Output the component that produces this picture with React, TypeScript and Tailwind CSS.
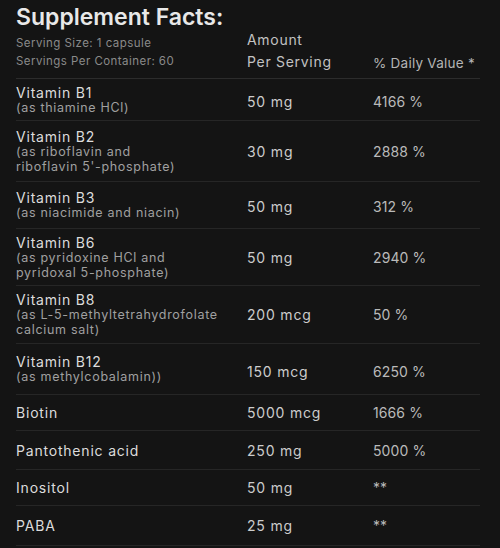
import React from "react";

type Row = { name: string; sub?: string[]; amount: string; dv: string; h: number; off?: number };

const rows: Row[] = [
  { name: "Vitamin B1", sub: ["(as thiamine HCl)"], amount: "50 mg", dv: "4166 %", h: 42, off: 2 },
  { name: "Vitamin B2", sub: ["(as riboflavin and", "riboflavin 5'-phosphate)"], amount: "30 mg", dv: "2888 %", h: 61 },
  { name: "Vitamin B3", sub: ["(as niacimide and niacin)"], amount: "50 mg", dv: "312 %", h: 47, off: 1 },
  { name: "Vitamin B6", sub: ["(as pyridoxine HCl and", "pyridoxal 5-phosphate)"], amount: "50 mg", dv: "2940 %", h: 57 },
  { name: "Vitamin B8", sub: ["(as L-5-methyltetrahydrofolate", "calcium salt)"], amount: "200 mcg", dv: "50 %", h: 58 },
  { name: "Vitamin B12", sub: ["(as methylcobalamin))"], amount: "150 mcg", dv: "6250 %", h: 51, off: 2 },
  { name: "Biotin", amount: "5000 mcg", dv: "1666 %", h: 36 },
  { name: "Pantothenic acid", amount: "250 mg", dv: "5000 %", h: 39 },
  { name: "Inositol", amount: "50 mg", dv: "**", h: 36 },
  { name: "PABA", amount: "25 mg", dv: "**", h: 40 },
];

export default function App() {
  return (
    <div
      className="w-[500px] h-[548px] bg-[#141414] overflow-hidden px-4"
      style={{ fontFamily: "Inter, 'DejaVu Sans', sans-serif" }}
    >
      <div className="w-[464px]">
        <div className="h-[29px] pt-[2px] text-[23px] leading-[30px] font-semibold text-[#e8e8e8] tracking-[0px]">
          Supplement Facts:
        </div>
        <div className="grid grid-cols-[231px_126px_107px] h-[50px] border-b border-[#2c2c2c]">
          <div className="pt-[5px] text-[11.5px] leading-[18px] text-[#8a8a8a] tracking-[0.45px]">
            <div>Serving Size: 1 capsule</div>
            <div>Servings Per Container: 60</div>
          </div>
          <div className="text-[14px] leading-[22px] text-[#c2c2c2] tracking-[0.7px]">
            <div>Amount</div>
            <div>Per Serving</div>
          </div>
          <div className="pt-[23px] text-[13.5px] leading-[22px] text-[#b5b5b5] tracking-[0.25px]">% Daily Value *</div>
        </div>
        {rows.map((r, i) => (
          <div
            key={i}
            className="grid grid-cols-[231px_126px_107px] items-center border-b border-[#262626]"
            style={{ height: r.h }}
          >
            <div>
              <div className="text-[14px] leading-[15px] text-[#dcdcdc] tracking-[0.8px]">{r.name}</div>
              {r.sub &&
                r.sub.map((s, j) => (
                  <div key={j} className="text-[12.5px] leading-[15px] text-[#a0a0a0] tracking-[0.7px]">
                    {s}
                  </div>
                ))}
            </div>
            <div className="text-[14px] text-[#cccccc] tracking-[0.8px]" style={{ paddingTop: r.off ? r.off * 2 : 0 }}>
              {r.amount}
            </div>
            <div className="text-[14px] text-[#bababa] tracking-[0.1px]" style={{ paddingTop: r.off ? r.off * 2 : 0 }}>
              {r.dv}
            </div>
          </div>
        ))}
      </div>
    </div>
  );
}
